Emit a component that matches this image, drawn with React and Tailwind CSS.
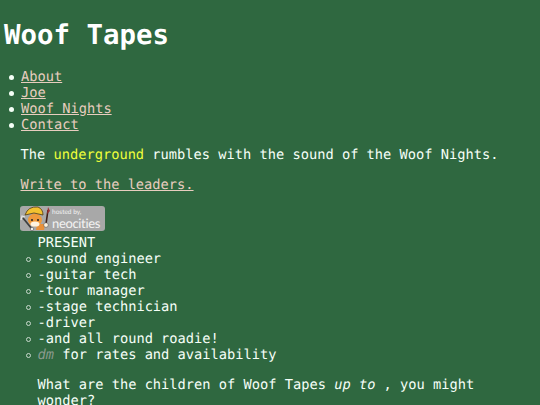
const navLinks = ['About', 'Joe', 'Woof Nights', 'Contact'];

const roles = ['-sound engineer', '-guitar tech', '-tour manager', '-stage technician', '-driver', '-and all round roadie!'];

// neocities "hosted by" badge, cat drawn by hand
const NeocitiesBadge = () => (
  <div className="-ml-[0.5px] flex h-[25px] w-[85px] items-center rounded-[3px] bg-[#a8a8a8]">
    <svg width="32" height="25" viewBox="0 0 32 25" className="shrink-0">
      <path d="M3 12 L12 23" stroke="#3f3f3f" strokeWidth="1.8" fill="none" />
      <path d="M1 14 L2 10 L5 11" stroke="#e6e6e6" strokeWidth="1.2" fill="none" />
      <circle cx="12" cy="23" r="1.7" fill="#efefef" stroke="#444444" strokeWidth="0.5" />
      <path d="M17 18 L16 24 L24 24 L25 18 Z" fill="#e8913a" />
      <ellipse cx="15" cy="14" rx="7" ry="6.5" fill="#ef9a3c" />
      <ellipse cx="15" cy="18" rx="4.5" ry="2.6" fill="#fff3df" />
      <path d="M5 9 Q8 0 18 1 Q23 3 23 9 L14 7 Z" fill="#f2c230" stroke="#4f3a10" strokeWidth="0.8" />
      <circle cx="12" cy="14" r="1" fill="#1f1f1f" />
      <circle cx="18" cy="14" r="1" fill="#1f1f1f" />
      <path d="M28 4 L26 18" stroke="#3f2018" strokeWidth="1.6" />
      <path d="M28 1 L30 5 L27 8 Z" fill="#9c2f2f" />
      <circle cx="26" cy="19" r="2.3" fill="#fff3df" stroke="#444444" strokeWidth="0.5" />
    </svg>
    <div className="flex flex-col pt-[1px] text-[#f2f2f2] font-['Lato',sans-serif]">
      <span className="text-[6.5px] leading-[8px]">hosted by,</span>
      <span className="text-[13px] leading-[12px] tracking-[-0.35px]">neocities</span>
    </div>
  </div>
);

export default function App() {
  return (
    <div className="h-[405px] overflow-hidden bg-[#2f6840] text-[#f6fff8] font-['DejaVu_Sans_Mono',monospace] text-[13.7px] leading-4 [text-rendering:geometricPrecision]">
      <h1 className="ml-1 pt-[19px] text-[27.4px] leading-[34px] font-bold text-white">Woof Tapes</h1>

      <ul className="mt-[16px] pl-[9px]">
        {navLinks.map((link) => (
          <li key={link} className="flex items-center">
            <span className="mr-[7px] size-[5px] shrink-0 rounded-full bg-[#f4fff6]" />
            <a href="#" className="text-[#e8cdbf] underline">{link}</a>
          </li>
        ))}
      </ul>

      <div className="pl-[20.5px]">
        <p className="mt-[14px]">
          The <span className="text-[#eeff3a]">underground</span> rumbles with the sound of the Woof Nights.
        </p>
        <p className="mt-[14px]">
          <a href="#" className="text-[#e8cdbf] underline">Write to the leaders.</a>
        </p>
        <div className="mt-[13px]">
          <NeocitiesBadge />
        </div>

        <div className="mt-[4px]">
          <p className="pl-[17px]">PRESENT</p>
          <ul className="pl-[5px]">
            {roles.map((role) => (
              <li key={role} className="flex items-center">
                <span className="mr-[7px] size-[5px] shrink-0 rounded-full border border-[#c9d9cd]" />
                {role}
              </li>
            ))}
            <li className="flex items-center whitespace-pre">
              <span className="mr-[7px] size-[5px] shrink-0 rounded-full border border-[#c9d9cd]" />
              <em className="text-[#8a9a8e]">dm</em> for rates and availability
            </li>
          </ul>
          <p className="mt-[14px] pl-[17px] pr-6">
            What are the children of Woof Tapes <em>up to</em> , you might wonder?
          </p>
        </div>
      </div>
    </div>
  );
}
